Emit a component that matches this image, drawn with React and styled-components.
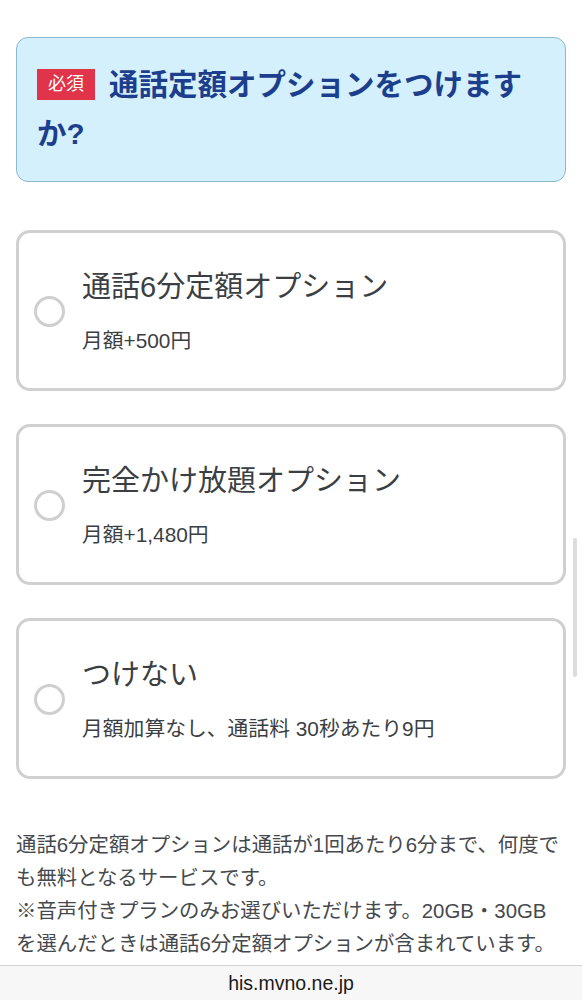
import React from "react";
import styled, { createGlobalStyle } from "styled-components";

const Global = createGlobalStyle`
  html, body { margin: 0; padding: 0; background: #fff; }
  body { font-family: "Liberation Sans", "Noto Sans CJK JP", sans-serif; }
`;

const Page = styled.div`
  padding: 37px 16px 80px;
  display: flex;
  flex-direction: column;
`;

const Question = styled.div`
  background: #d3f0fc;
  border: 1.5px solid #8cb8ce;
  border-radius: 12px;
  padding: 22px 20px 23px;
`;

const QuestionTitle = styled.h2`
  margin: 0;
  font-size: 29.5px;
  line-height: 49px;
  font-weight: 700;
  color: #1c3e8d;
`;

const Badge = styled.span`
  display: inline-block;
  background: #e1334a;
  color: #fff;
  font-size: 18px;
  font-weight: 400;
  line-height: 31px;
  height: 31px;
  padding: 0 11px;
  margin-right: 14px;
  vertical-align: 5px;
`;

const Options = styled.div`
  display: flex;
  flex-direction: column;
  gap: 33px;
  margin-top: 48px;
`;

const Card = styled.label`
  display: flex;
  align-items: center;
  border: 3px solid #d0d0d0;
  border-radius: 14px;
  padding: 34px 20px 32px 15px;
  cursor: pointer;
`;

const Radio = styled.span`
  flex: none;
  width: 25px;
  height: 25px;
  border: 3px solid #cfcfcf;
  border-radius: 50%;
  margin-right: 17px;
`;

const OptionText = styled.div`
  display: flex;
  flex-direction: column;
  gap: 19px;
`;

const OptionTitle = styled.div`
  font-size: 29px;
  line-height: 40px;
  color: #3b3f44;
`;

const OptionSub = styled.div`
  font-size: 20.8px;
  line-height: 30px;
  color: #3b3f44;
`;

const Note = styled.p`
  margin: 50px 0 0;
  font-size: 20.4px;
  line-height: 33px;
  color: #45494d;
  white-space: nowrap;
`;

const AddressBar = styled.div`
  position: fixed;
  left: 0;
  right: 0;
  bottom: 0;
  height: 34px;
  background: #f7f7f7;
  border-top: 1px solid #d2d2d2;
  display: flex;
  align-items: center;
  justify-content: center;
  font-family: "Liberation Sans", sans-serif;
  font-size: 19.5px;
  color: #1a1a1a;
`;

const ScrollThumb = styled.div`
  position: fixed;
  right: 5px;
  top: 538px;
  width: 4px;
  height: 139px;
  border-radius: 2px;
  background: #dcdcdc;
`;

const options = [
  { title: "通話6分定額オプション", sub: "月額+500円" },
  { title: "完全かけ放題オプション", sub: "月額+1,480円" },
  { title: "つけない", sub: "月額加算なし、通話料 30秒あたり9円" },
];

export default function App() {
  return (
    <>
      <Global />
      <Page>
        <Question>
          <QuestionTitle>
            <Badge>必須</Badge>通話定額オプションをつけますか?
          </QuestionTitle>
        </Question>
        <Options>
          {options.map((o) => (
            <Card key={o.title}>
              <Radio />
              <OptionText>
                <OptionTitle>{o.title}</OptionTitle>
                <OptionSub>{o.sub}</OptionSub>
              </OptionText>
            </Card>
          ))}
        </Options>
        <Note>
          通話6分定額オプションは通話が1回あたり6分まで、何度で
          <br />
          も無料となるサービスです。
          <br />
          ※音声付きプランのみお選びいただけます。20GB・30GB
          <br />
          を選んだときは通話6分定額オプションが含まれています。
          <br />
          ※通話オプションの変更は、翌月から適用されます。
        </Note>
      </Page>
      <ScrollThumb />
      <AddressBar>his.mvno.ne.jp</AddressBar>
    </>
  );
}
